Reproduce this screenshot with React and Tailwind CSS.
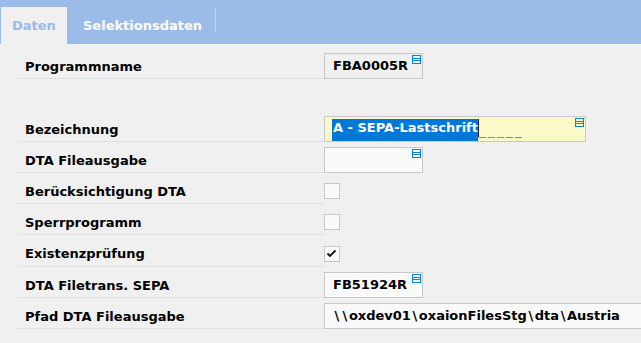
import React from "react";

function FieldIcon() {
  return (
    <svg className="absolute top-[1px] right-[1px]" width="9" height="9" viewBox="0 0 9 9">
      <rect x="0.5" y="0.5" width="8" height="8" fill="none" stroke="#0a86d8" strokeWidth="1" />
      <line x1="1" y1="3.5" x2="8" y2="3.5" stroke="#0a86d8" strokeWidth="1" />
      <line x1="1" y1="5.5" x2="8" y2="5.5" stroke="#0a86d8" strokeWidth="1" />
    </svg>
  );
}

function Label({ children }) {
  return (
    <div className="w-[307px] shrink-0 border-b border-[#e0e0e0] pl-[8px] pt-[11px] leading-[15px] text-black">
      {children}
    </div>
  );
}

function Box({ children, w = "w-[99px]", bg = "bg-[#fafafa]", icon = true }) {
  return (
    <div className={`relative h-[26px] ${w} ${bg} border border-[#c8c8c8] pl-[8px] pt-[3px] leading-[18px] text-black whitespace-nowrap`}>
      {children}
      {icon && <FieldIcon />}
    </div>
  );
}

function Check({ checked }) {
  return (
    <div className="relative w-[16px] h-[16px] border border-[#c8c8c8] bg-[#fafafa]">
      {checked && (
        <svg className="absolute left-[1px] top-[2px]" width="11" height="9" viewBox="0 0 11 9">
          <path d="M1.5 4.5 L4 7 L9.5 1.5" fill="none" stroke="#111" strokeWidth="1.8" />
        </svg>
      )}
    </div>
  );
}

function Bs() {
  return <span className="mx-[1.6px]">{"\\"}</span>;
}

export default function App() {
  return (
    <div
      className="w-[641px] h-[343px] bg-[#f0f0f0] overflow-hidden text-[13px] font-bold"
      style={{ fontFamily: '"DejaVu Sans", Verdana, sans-serif' }}
    >
      <div className="h-[44px] bg-[#9bbbe9] flex items-end pl-[1px]">
        <div className="h-[37px] w-[66px] bg-[#f0f0f0] flex items-center pl-[11px] text-[#9bbbe9]">Daten</div>
        <div className="h-[37px] ml-[16px] flex items-center text-white">Selektionsdaten</div>
        <div className="self-start mt-[8px] ml-[13px] w-px h-[24px] bg-[#c4d6f1]" />
      </div>

      <div className="pt-[4px] pl-[17px]">
        <div className="flex h-[31px]">
          <Label>Programmname</Label>
          <div className="pt-[5px]">
            <Box bg="bg-[#f0f0f0]">FBA0005R</Box>
          </div>
        </div>
        <div className="h-[32px]" />
        <div className="flex h-[31px]">
          <Label>Bezeichnung</Label>
          <div className="pt-[5px]">
            <div className="relative h-[26px] w-[262px] bg-[#fafac8] border border-[#c8c8c8] pl-[7px] pt-[2px] leading-[18px] whitespace-nowrap flex">
              <span className="bg-[#0078d7] text-white pl-[1px]">A - SEPA-Lastschrift</span>
              <span className="w-px h-[18px] bg-[#1a1a40]" />
              <span className="flex gap-[2px] items-end h-[19px]">
                <span className="w-[7px] h-px bg-[#8a8a8a]" />
                <span className="w-[7px] h-px bg-[#8a8a8a]" />
                <span className="w-[7px] h-px bg-[#8a8a8a]" />
                <span className="w-[7px] h-px bg-[#8a8a8a]" />
                <span className="w-[7px] h-px bg-[#8a8a8a]" />
              </span>
              <FieldIcon />
            </div>
          </div>
        </div>
        <div className="flex h-[31px]">
          <Label>DTA Fileausgabe</Label>
          <div className="pt-[5px]">
            <Box>{""}</Box>
          </div>
        </div>
        <div className="flex h-[31px]">
          <Label>Berücksichtigung DTA</Label>
          <div className="pt-[10px]">
            <Check />
          </div>
        </div>
        <div className="flex h-[31px]">
          <Label>Sperrprogramm</Label>
          <div className="pt-[10px]">
            <Check />
          </div>
        </div>
        <div className="flex h-[32px]">
          <Label>Existenzprüfung</Label>
          <div className="pt-[11px]">
            <Check checked />
          </div>
        </div>
        <div className="flex h-[31px]">
          <Label>DTA Filetrans. SEPA</Label>
          <div className="pt-[5px]">
            <Box>FB51924R</Box>
          </div>
        </div>
        <div className="flex h-[31px]">
          <Label>Pfad DTA Fileausgabe</Label>
          <div className="pt-[5px]">
            <Box w="w-[340px]" icon={false}>
              <Bs /><Bs />oxdev01<Bs />oxaionFilesStg<Bs />dta<Bs />Austria
            </Box>
          </div>
        </div>
      </div>
    </div>
  );
}
